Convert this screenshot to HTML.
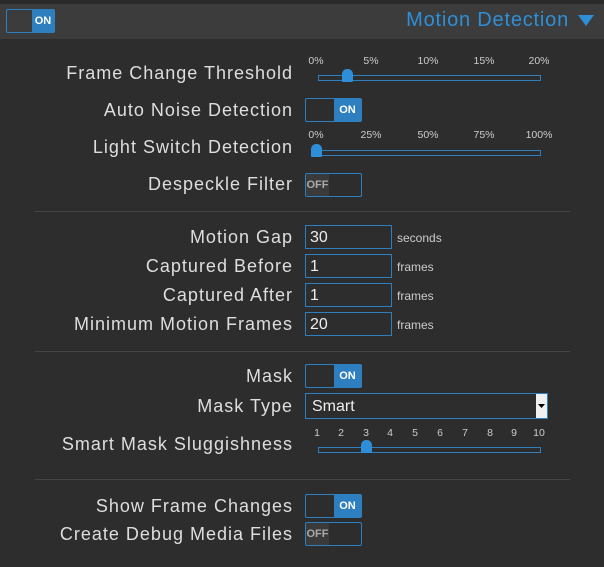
<!DOCTYPE html><html><head><style>
body{margin:0;width:604px;height:567px;background:#2d2d2d;font-family:"Liberation Sans",sans-serif;position:relative;overflow:hidden}
.a{position:absolute}
.lbl{position:absolute;right:311px;color:#dedede;font-size:18px;letter-spacing:1px;white-space:nowrap;line-height:20px}
.tg{position:absolute;width:55px;height:22px;border:1px solid #2e7fbf;border-radius:2px;box-sizing:content-box}
.tg .on{position:absolute;right:0;top:0;width:27px;height:22px;background:#2e7fbf;color:#fff;font-size:11px;font-weight:bold;line-height:23px;text-align:center}
.tg .off{position:absolute;left:0;top:0;width:23px;height:22px;background:#3a3a3a;color:#aaa;font-size:11px;font-weight:bold;line-height:23px;text-align:center}
.trk{position:absolute;left:318px;width:221px;height:4px;border:1px solid #2e7fbf}
.th{position:absolute;width:11px;height:13px;background:#2e8fd8;border-radius:5px 5px 1px 1px}
.tk{position:absolute;color:#ccc;font-size:10.5px;transform:translateX(-50%)}
.sep{position:absolute;left:35px;width:535px;height:1px;background:#444}
.in{position:absolute;left:305px;width:87px;height:24px;border:1px solid #2e7fbf;color:#eee;font-size:16px;line-height:24px;padding-left:4px;box-sizing:border-box}
.u{position:absolute;left:397px;color:#ccc;font-size:12px}
</style></head><body>
<div class="a" style="left:0;top:0;width:604px;height:4px;background:#2a2a2a"></div>
<div class="a" style="left:0;top:4px;width:604px;height:35px;background:#3c3c3c"></div>
<div class="tg" style="left:6px;top:9px;width:47px"><div class="on" style="width:22px">ON</div></div>
<div class="a" style="right:35px;top:9px;color:#2e8fd8;font-size:20px;letter-spacing:0.8px">Motion Detection</div>
<svg class="a" style="left:578px;top:15px" width="16" height="12"><path d="M0 0H16L8 11Z" fill="#2e8fd8"/></svg>

<div class="lbl" style="top:63px">Frame Change Threshold</div>
<div class="tk" style="left:316px;top:55px">0%</div><div class="tk" style="left:371px;top:55px">5%</div><div class="tk" style="left:428px;top:55px">10%</div><div class="tk" style="left:484px;top:55px">15%</div><div class="tk" style="left:539px;top:55px">20%</div>
<div class="trk" style="top:75px"></div><div class="th" style="left:342px;top:69px"></div>
<div class="lbl" style="top:100px">Auto Noise Detection</div>
<div class="tg" style="left:305px;top:98px"><div class="on">ON</div></div>
<div class="lbl" style="top:137px">Light Switch Detection</div>
<div class="tk" style="left:316px;top:129px">0%</div><div class="tk" style="left:371px;top:129px">25%</div><div class="tk" style="left:428px;top:129px">50%</div><div class="tk" style="left:484px;top:129px">75%</div><div class="tk" style="left:539px;top:129px">100%</div>
<div class="trk" style="top:150px"></div><div class="th" style="left:311px;top:144px"></div>
<div class="lbl" style="top:174px">Despeckle Filter</div>
<div class="tg" style="left:305px;top:173px"><div class="off">OFF</div></div>
<div class="sep" style="top:211px"></div>
<div class="lbl" style="top:227px">Motion Gap</div><div class="in" style="top:225px">30</div><div class="u" style="top:231px">seconds</div>
<div class="lbl" style="top:256px">Captured Before</div><div class="in" style="top:254px">1</div><div class="u" style="top:260px">frames</div>
<div class="lbl" style="top:285px">Captured After</div><div class="in" style="top:283px">1</div><div class="u" style="top:289px">frames</div>
<div class="lbl" style="top:314px">Minimum Motion Frames</div><div class="in" style="top:312px">20</div><div class="u" style="top:318px">frames</div>
<div class="sep" style="top:351px"></div>
<div class="lbl" style="top:366px">Mask</div>
<div class="tg" style="left:305px;top:364px"><div class="on">ON</div></div>
<div class="lbl" style="top:396px">Mask Type</div>
<div class="a" style="left:305px;top:393px;width:243px;height:26px;border:1px solid #2e7fbf;color:#eee;font-size:16px;line-height:25px;padding-left:6px;box-sizing:border-box">Smart</div>
<div class="a" style="left:536px;top:394px;width:11px;height:24px;background:#f0f0f0"></div>
<svg class="a" style="left:538px;top:404px" width="7" height="4"><path d="M0 0H7L3.5 4Z" fill="#000"/></svg>
<div class="lbl" style="top:434px">Smart Mask Sluggishness</div>
<div class="tk" style="left:317px;top:427px">1</div><div class="tk" style="left:341px;top:427px">2</div><div class="tk" style="left:366px;top:427px">3</div><div class="tk" style="left:390px;top:427px">4</div><div class="tk" style="left:415px;top:427px">5</div><div class="tk" style="left:440px;top:427px">6</div><div class="tk" style="left:465px;top:427px">7</div><div class="tk" style="left:490px;top:427px">8</div><div class="tk" style="left:514px;top:427px">9</div><div class="tk" style="left:539px;top:427px">10</div>
<div class="trk" style="top:447px"></div><div class="th" style="left:361px;top:440px"></div>
<div class="sep" style="top:479px"></div>
<div class="lbl" style="top:496px">Show Frame Changes</div>
<div class="tg" style="left:305px;top:494px"><div class="on">ON</div></div>
<div class="lbl" style="top:524px">Create Debug Media Files</div>
<div class="tg" style="left:305px;top:522px"><div class="off">OFF</div></div>
</body></html>
